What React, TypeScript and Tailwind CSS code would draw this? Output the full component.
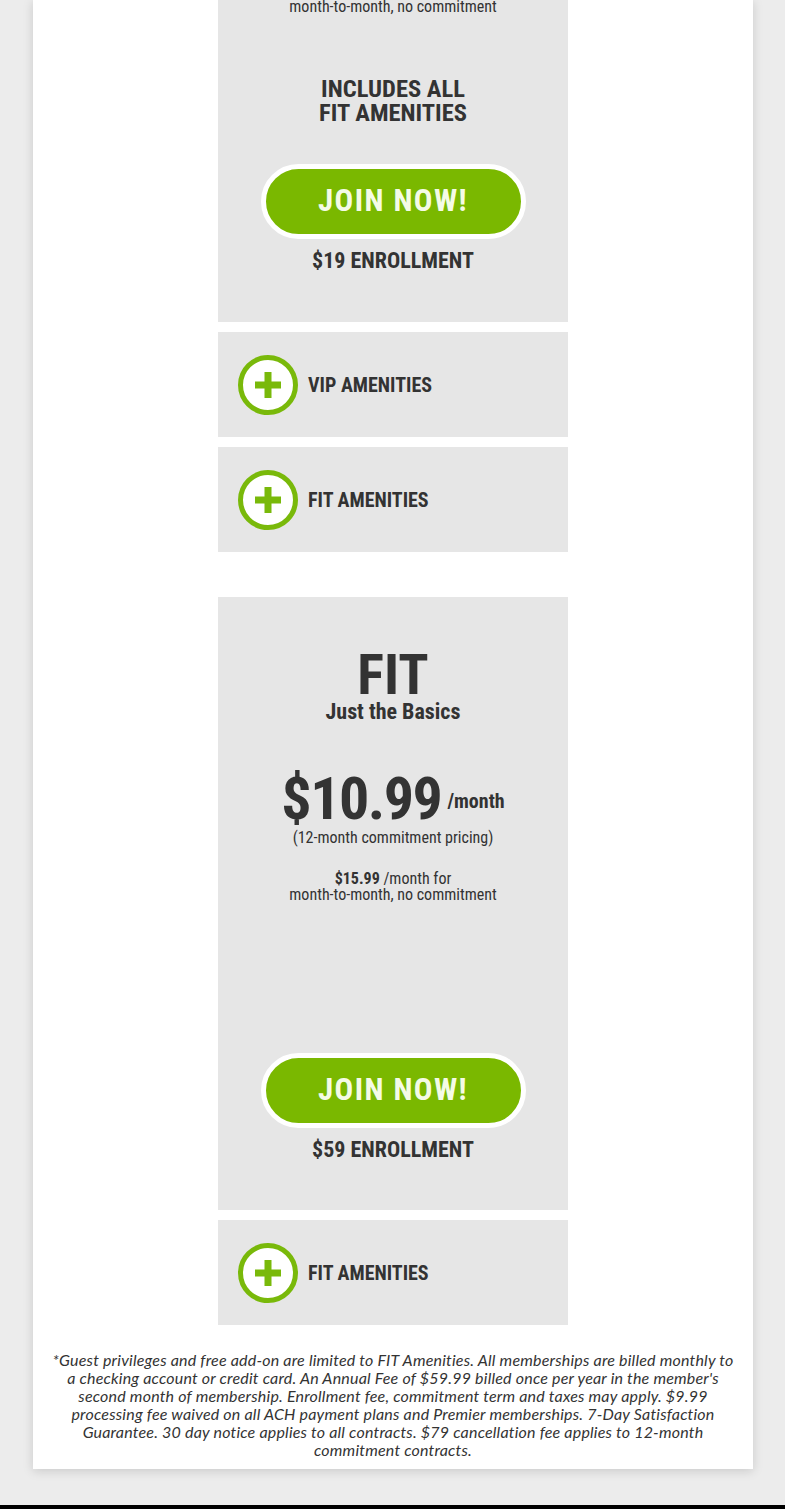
import React from "react";

const cond = "font-['Roboto_Condensed','Liberation_Sans_Narrow','DejaVu_Sans_Condensed',Roboto,sans-serif]";

function PlusCircle() {
  return (
    <svg width="60" height="60" viewBox="0 0 60 60" className="shrink-0">
      <circle cx="30" cy="30" r="27.5" fill="#ffffff" stroke="#79b90a" strokeWidth="5" />
      <rect x="26.5" y="17" width="7" height="26" fill="#79b90a" />
      <rect x="17" y="26.5" width="26" height="7" fill="#79b90a" />
    </svg>
  );
}

function Amenity({ label }: { label: string }) {
  return (
    <div className="bg-[#e6e6e6] h-[105px] flex items-center pl-5 gap-[10px]">
      <PlusCircle />
      <span className={`${cond} font-bold text-[20px] text-[#333333]`}>{label}</span>
    </div>
  );
}

function JoinButton() {
  return (
    <div className="flex justify-center">
      <div className="w-[265px] h-[75px] rounded-full border-[5px] border-white bg-[#7ab800] flex items-center justify-center">
        <span className={`${cond} font-bold text-[31px] text-[#f4fbe6] tracking-[1.4px]`}>JOIN NOW!</span>
      </div>
    </div>
  );
}

export default function App() {
  return (
    <div className="min-h-[1509px] bg-[#ececec] relative">
      <div className="ml-[33px] w-[720px] bg-white shadow-[0_2px_10px_rgba(0,0,0,0.15)]">
        <div className="w-[350px] mx-auto">
          {/* VIP card (bottom part) */}
          <div className={`bg-[#e6e6e6] h-[322px] flex flex-col items-center text-[#333333] ${cond}`}>
            <div className="text-[16px] leading-[16px] -mt-[1px]">month-to-month, no commitment</div>
            <div className="mt-[62px] text-[24.5px] leading-[24px] font-bold text-center">
              INCLUDES ALL
              <br />
              FIT AMENITIES
            </div>
            <div className="mt-[39px] w-full">
              <JoinButton />
            </div>
            <div className="mt-[10px] text-[22px] leading-[24px] font-bold">$19 ENROLLMENT</div>
          </div>
          <div className="h-[10px]" />
          <Amenity label="VIP AMENITIES" />
          <div className="h-[10px]" />
          <Amenity label="FIT AMENITIES" />
          <div className="h-[45px]" />
          {/* FIT card */}
          <div className={`bg-[#e6e6e6] h-[613px] flex flex-col items-center text-[#333333] ${cond}`}>
            <div className="mt-[53px] text-[56px] leading-[50px] font-bold">FIT</div>
            <div className="text-[22px] leading-[24px] font-bold">Just the Basics</div>
            <div className="mt-[47px] flex items-center">
              <span className="text-[60px] leading-[56px] font-bold tracking-[-1.5px]">$10.99</span>
              <span className="ml-[6px] mt-[4px] text-[20px] leading-[24px] font-bold">/month</span>
            </div>
            <div className="mt-[1px] text-[16px] leading-[20px]">(12-month commitment pricing)</div>
            <div className="mt-[23px] text-[16px] leading-[16px] text-center">
              <span className="font-bold">$15.99</span> /month for
              <br />
              month-to-month, no commitment
            </div>
            <div className="mt-[150px] w-full">
              <JoinButton />
            </div>
            <div className="mt-[10px] text-[22px] leading-[24px] font-bold">$59 ENROLLMENT</div>
          </div>
          <div className="h-[10px]" />
          <Amenity label="FIT AMENITIES" />
        </div>
        <p className="mt-[26px] pb-[10px] px-[15px] text-center italic text-[16px] leading-[18px] text-[#333333] font-['Lato',sans-serif] tracking-[0.2px]">
          *Guest privileges and free add-on are limited to FIT Amenities. All memberships are billed monthly to a checking account or credit card. An Annual Fee of $59.99 billed once per year in the member's second month of membership. Enrollment fee, commitment term and taxes may apply. $9.99 processing fee waived on all ACH payment plans and Premier memberships. 7-Day Satisfaction Guarantee. 30 day notice applies to all contracts. $79 cancellation fee applies to 12-month commitment contracts.
        </p>
      </div>
      <div className="absolute left-0 right-0 top-[1505px] h-[4px] bg-black" />
    </div>
  );
}
